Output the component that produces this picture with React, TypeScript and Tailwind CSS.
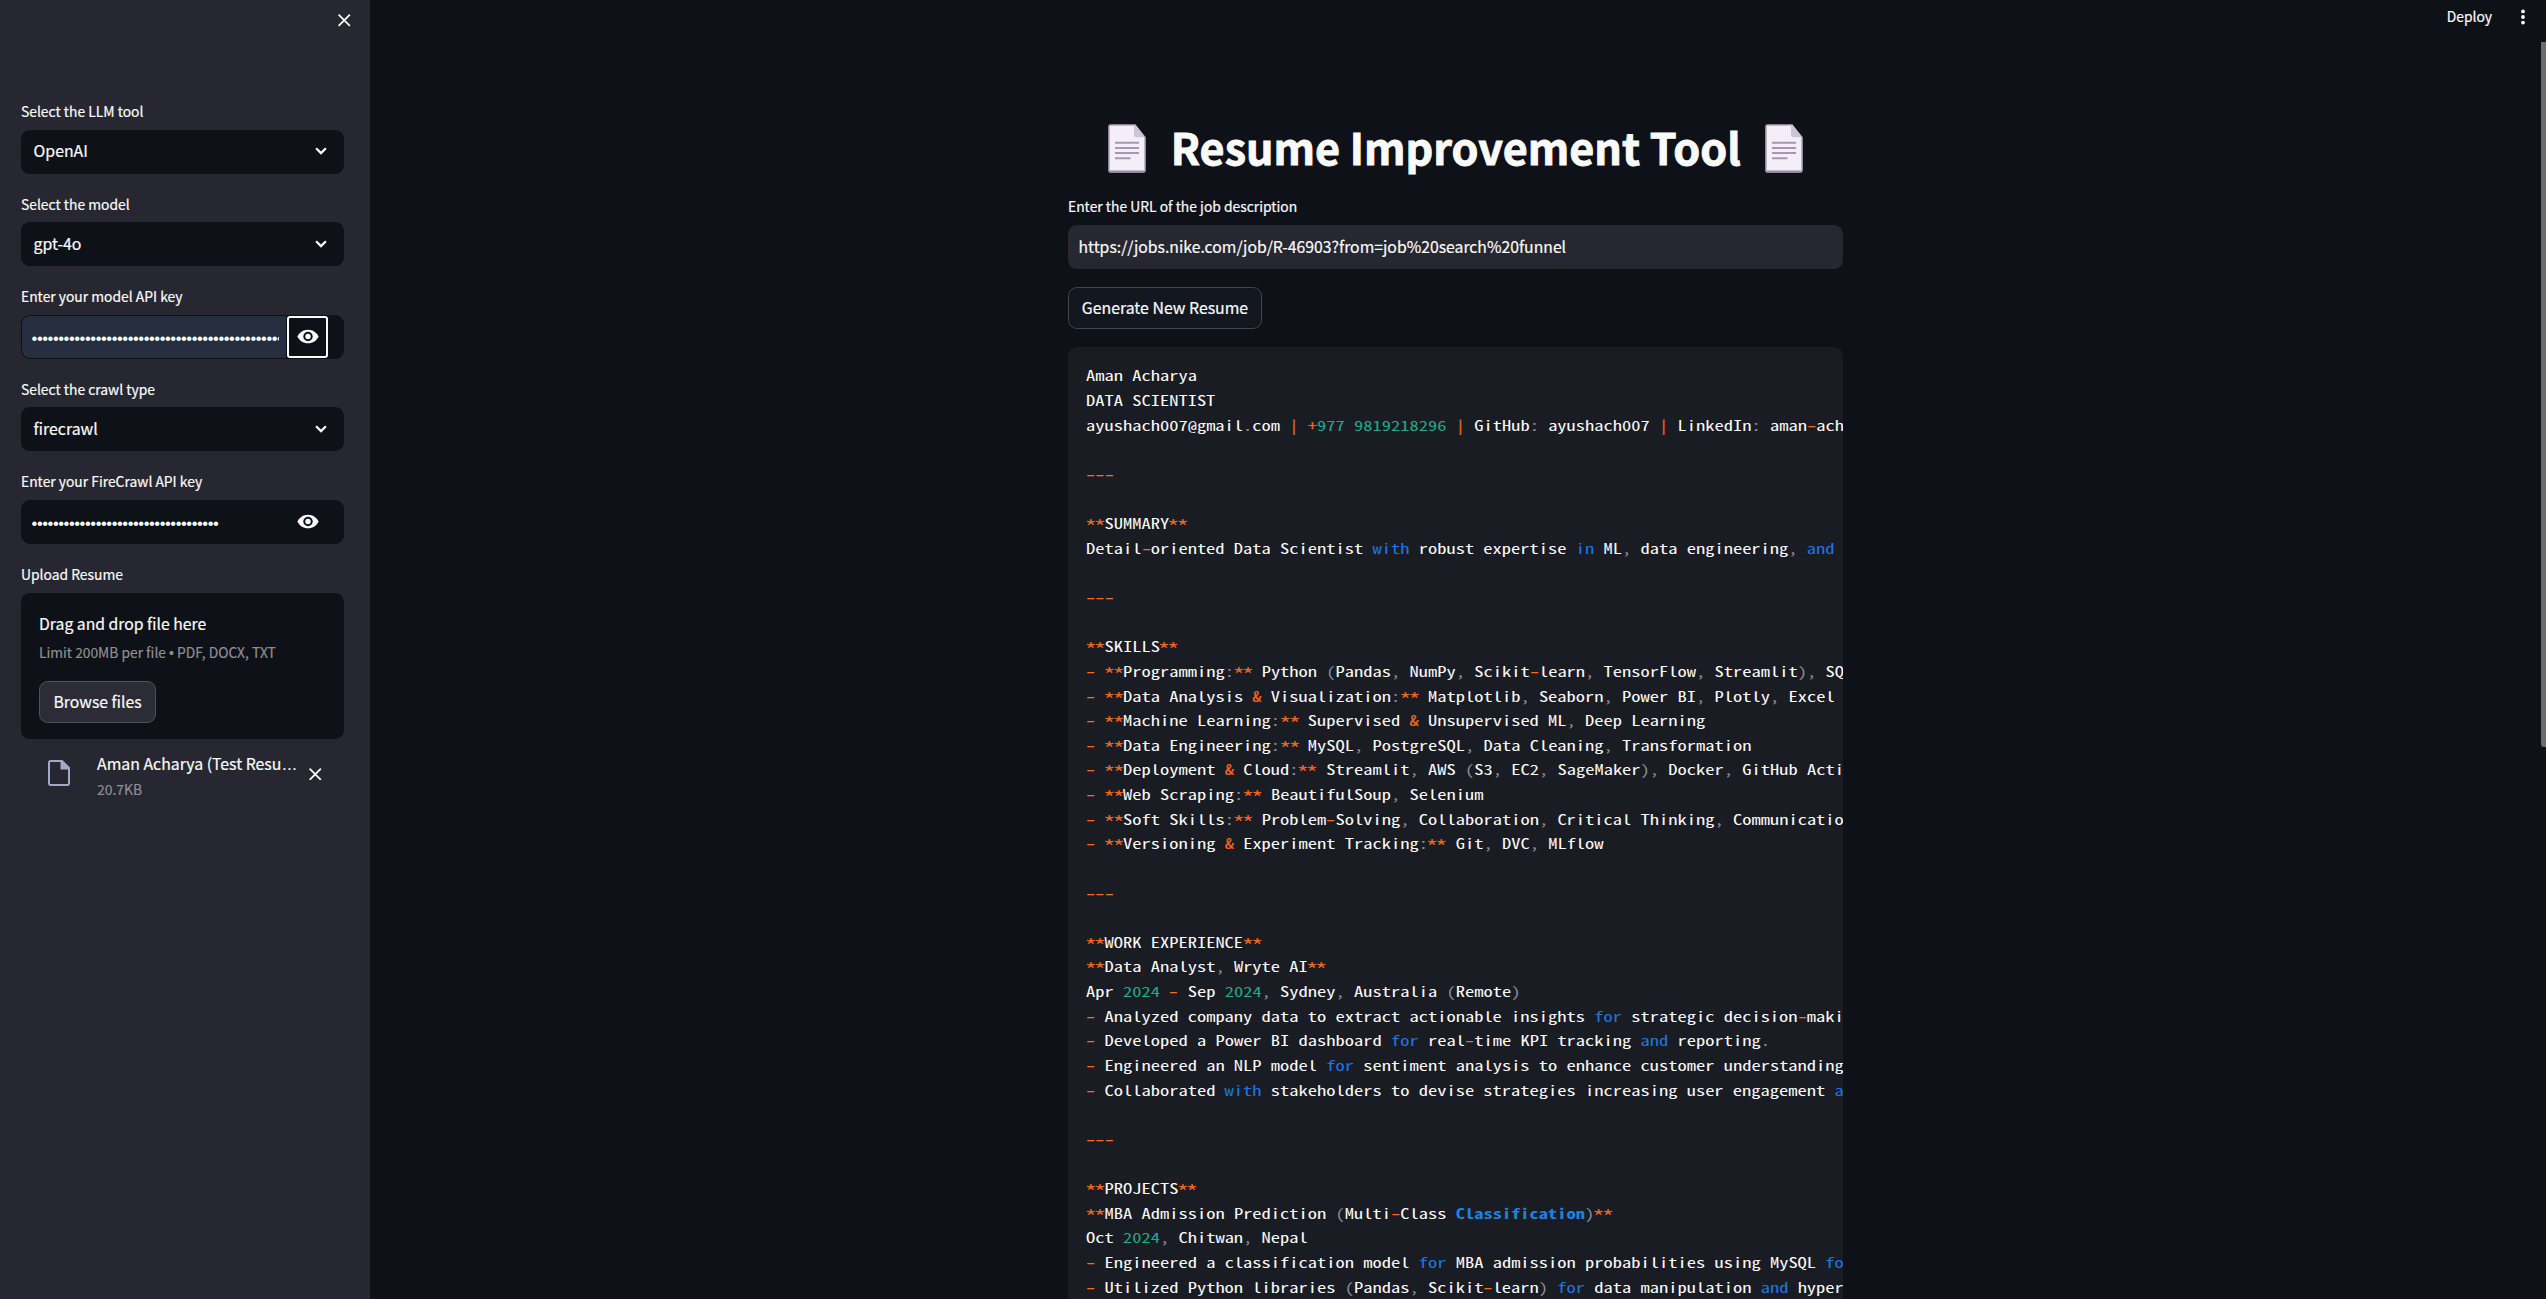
import React from "react";

const KEYWORDS = new Set(["with", "in", "and", "for"]);

const RESUME = `Aman Acharya
DATA SCIENTIST
ayushach007@gmail.com | +977 9819218296 | GitHub: ayushach007 | LinkedIn: aman-acharya

---

**SUMMARY**
Detail-oriented Data Scientist with robust expertise in ML, data engineering, and analytics.

---

**SKILLS**
- **Programming:** Python (Pandas, NumPy, Scikit-learn, TensorFlow, Streamlit), SQL
- **Data Analysis & Visualization:** Matplotlib, Seaborn, Power BI, Plotly, Excel
- **Machine Learning:** Supervised & Unsupervised ML, Deep Learning
- **Data Engineering:** MySQL, PostgreSQL, Data Cleaning, Transformation
- **Deployment & Cloud:** Streamlit, AWS (S3, EC2, SageMaker), Docker, GitHub Actions
- **Web Scraping:** BeautifulSoup, Selenium
- **Soft Skills:** Problem-Solving, Collaboration, Critical Thinking, Communication
- **Versioning & Experiment Tracking:** Git, DVC, MLflow

---

**WORK EXPERIENCE**
**Data Analyst, Wryte AI**
Apr 2024 - Sep 2024, Sydney, Australia (Remote)
- Analyzed company data to extract actionable insights for strategic decision-making.
- Developed a Power BI dashboard for real-time KPI tracking and reporting.
- Engineered an NLP model for sentiment analysis to enhance customer understanding.
- Collaborated with stakeholders to devise strategies increasing user engagement and retention.

---

**PROJECTS**
**MBA Admission Prediction (Multi-Class Classification)**
Oct 2024, Chitwan, Nepal
- Engineered a classification model for MBA admission probabilities using MySQL for storage.
- Utilized Python libraries (Pandas, Scikit-learn) for data manipulation and hyperparameter tuning.`;

function tokenClass(token: string): string {
  if (KEYWORDS.has(token)) return "text-[#1c77e0]";
  if (token === "Classification") return "font-bold text-[#1c83e1]";
  if (/^\d+$/.test(token)) return "text-[#21a98c]";
  if (token === "*") return "inline-block translate-y-[3px] scale-[1.35] leading-none text-[#f0641a]";
  if (token === "-") return "inline-block -translate-y-[0.6px] scale-x-[1.22] leading-none text-[#ff6a14] [-webkit-text-stroke:0.25px]";
  if (/^[|+&]$/.test(token)) return "text-[#f0641a] [-webkit-text-stroke:0.2px]";
  if (/^[.,:()]$/.test(token)) return "text-[#8a8e9c]";
  return "";
}

function CodeLine({ line }: { line: string }) {
  const tokens = line.match(/\w+|\s+|./g) ?? [];
  return (
    <div className="h-[24.64px]">
      {tokens.map((t, i) => {
        const cls = tokenClass(t);
        return cls ? (
          <span key={i} className={cls}>{t}</span>
        ) : (
          <React.Fragment key={i}>{t}</React.Fragment>
        );
      })}
    </div>
  );
}

function Label({ children }: { children: React.ReactNode }) {
  return <div className="h-[30.8px] text-[13.87px] leading-[25px] whitespace-nowrap">{children}</div>;
}

function Chevron() {
  return (
    <svg className="mr-[3px] h-[8px] w-[12px]" viewBox="0 0 12 8" fill="none" stroke="currentColor" strokeWidth="2.300">
      <path d="M1.100 1.300 6 6.100l4.900-4.800" />
    </svg>
  );
}

function Cross({ className }: { className: string }) {
  return (
    <svg className={className} viewBox="0 0 12 12" fill="none" stroke="currentColor" strokeWidth="1.700">
      <path d="M.6.6 11.400 11.400M11.400.6.6 11.400" />
    </svg>
  );
}

function Eye() {
  return (
    <svg className="h-[16px] w-[22px] -translate-y-[0.5px]" viewBox="0 0 22 16" fill="none">
      <path d="M11 1.200C6.200 1.200 2.200 4 .5 8c1.700 4 5.700 6.800 10.500 6.800S19.800 12 21.500 8C19.800 4 15.800 1.200 11 1.200z" fill="#fafafa" />
      <circle cx="11" cy="8" r="4.700" fill="#0e1117" />
      <circle cx="11" cy="8" r="2.700" fill="#fafafa" />
    </svg>
  );
}

function Select({ label, value }: { label: string; value: string }) {
  return (
    <div>
      <Label>{label}</Label>
      <div className="flex h-11 items-center justify-between rounded-[8.8px] bg-[#0e1117] pr-[14px] pb-[1px] pl-[12.600px] text-[15.85px] leading-6">
        <span>{value}</span>
        <Chevron />
      </div>
    </div>
  );
}

function Secret({ label, count, focused }: { label: string; count: number; focused?: boolean }) {
  return (
    <div>
      <Label>{label}</Label>
      <div className="flex h-11 overflow-hidden rounded-[8.8px] border border-[#0e1117] bg-[#0e1117]">
        <div className={focused ? "w-[264px] bg-[#262e40] pr-[7px] pl-[9.600px]" : "w-[264px] pr-[7px] pl-[9.600px]"}>
          <div className="overflow-hidden font-['Liberation_Sans',sans-serif] text-[16.5px] leading-[44px] tracking-[-0.440px] whitespace-nowrap [-webkit-text-stroke:0px]">
            {"•".repeat(count)}
          </div>
        </div>
        <div className={focused ? "ml-[1px] flex w-[41px] items-center justify-center rounded-[3px] border-2 border-[#fafafa]" : "ml-[1px] flex w-[41px] items-center justify-center"}>
          <Eye />
        </div>
      </div>
    </div>
  );
}

function PageIcon() {
  return (
    <svg className="mt-[2px] h-[49px] w-[38px]" viewBox="0 0 38 49">
      <path d="M2.500 1h24.500l10 12.500v32.500a2 2 0 0 1-2 2h-32.500a1.500 1.500 0 0 1-1.500-1.500v-44a1.500 1.500 0 0 1 1.500-1.500z" fill="#f3eef8" stroke="#b4a6b9" strokeWidth="1.600" />
      <path d="M26 1h1.500L37 13.300h-9a2 2 0 0 1-2-2z" fill="#cdc4d6" />
      <path d="M1.500 47.500h35" stroke="#998ea4" strokeWidth="1.800" />
      <path d="M7 18.700h24M7 24h24M7 29h24M7 34.200h15.500" stroke="#a897ae" strokeWidth="1.900" />
    </svg>
  );
}

function Sidebar() {
  return (
    <aside className="flex h-full w-[370px] shrink-0 flex-col bg-[#262730] pr-[26px] pl-[21px]">
      <div className="flex h-[99.2px] justify-end pt-[14px]">
        <Cross className="mr-[-6.500px] size-[12.500px]" />
      </div>
      <div className="flex flex-col gap-[17.7px]">
        <Select label="Select the LLM tool" value="OpenAI" />
        <Select label="Select the model" value="gpt-4o" />
        <Secret label="Enter your model API key" count={56} focused />
        <Select label="Select the crawl type" value="firecrawl" />
        <Secret label="Enter your FireCrawl API key" count={35} />
        <div className="pt-[0.5px]">
          <Label>Upload Resume</Label>
          <div className="flex h-[146px] flex-col items-start rounded-[8.8px] bg-[#0e1117] px-[18px] pt-[17px]">
            <div className="text-[15.75px] leading-[28px]">Drag and drop file here</div>
            <div className="mt-[2px] text-[13.8px] leading-[25px] text-[#8e8f93]">
              Limit 200MB per file <span className="font-['Liberation_Sans']">•</span> PDF, DOCX, TXT
            </div>
            <button className="mt-[15px] h-[42px] rounded-[8.8px] border border-[#50515a] bg-[#2b2c36] px-[13.500px] text-[15.75px] leading-[38px]">
              Browse files
            </button>
          </div>
          <div className="flex items-start pt-[11px] pl-[27px]">
            <svg className="mt-[10px] h-[26px] w-[22px]" viewBox="0 0 22 26" fill="none">
              <path d="M2.500 1h11.500l7 7v15.500a1.500 1.500 0 0 1-1.500 1.500h-17a1.500 1.500 0 0 1-1.500-1.500v-21a1.500 1.500 0 0 1 1.500-1.500z" stroke="#a3a8c3" strokeWidth="2" />
              <path d="M12.500 1h2l7 7v1.500h-9z" fill="#a3a8c3" />
            </svg>
            <div className="ml-[27px] w-[201px]">
              <div className="text-[15.85px] leading-[28px] whitespace-nowrap">
                Aman Acharya (Test Resu<span className="font-['Liberation_Sans']">…</span>
              </div>
              <div className="text-[13.87px] leading-[20px] text-[#8e8f95]">20.7KB</div>
            </div>
            <Cross className="mt-[18px] ml-[11px] size-[12.500px]" />
          </div>
        </div>
      </div>
    </aside>
  );
}

export default function App() {
  return (
    <div className="relative flex h-[1299px] w-[2546px] overflow-hidden bg-[#0e1117] font-['Noto_Sans_CJK_SC',sans-serif] text-[#fafafa] [-webkit-text-stroke:0.2px]">
      <Sidebar />
      <main className="flex min-w-0 flex-1 flex-col">
        <header className="flex h-[42px] shrink-0 items-start justify-end pr-[20px]">
          <span className="pt-[3px] text-[13.87px] leading-[26px]">Deploy</span>
          <svg className="mt-[9px] ml-[28px] h-4 w-[6px]" viewBox="0 0 6 16" fill="currentColor">
            <circle cx="3" cy="2.400" r="1.900" />
            <circle cx="3" cy="8" r="1.900" />
            <circle cx="3" cy="13.600" r="1.900" />
          </svg>
        </header>
        <div className="ml-[698px] flex w-[775px] flex-1 flex-col">
          <h1 className="mt-[76px] flex h-[60px] items-center justify-center pb-[1px] text-[43.1px] leading-[60px] font-bold whitespace-nowrap">
            <PageIcon />
            <span className="mr-[24px] ml-[24.5px] w-[571px] -translate-y-[2px] text-center [-webkit-text-stroke:0.9px]">Resume Improvement Tool</span>
            <PageIcon />
          </h1>
          <div className="mt-[16px]">
            <Label>Enter the URL of the job description</Label>
          </div>
          <div className="h-11 rounded-[8.8px] bg-[#262730] pl-[10.5px] text-[15.78px] leading-[43px]">
            https://jobs.nike.com/job/R-46903?from=job%20search%20funnel
          </div>
          <button className="mt-[18px] h-[42px] w-[194px] shrink-0 rounded-[8.8px] border border-[#41444c] bg-[#131720] text-center text-[15.85px] leading-[40px] whitespace-nowrap">
            Generate New Resume
          </button>
          <div className="mt-[18px] h-[960px] shrink-0 overflow-hidden rounded-[8.8px] bg-[#1a1c24] pt-[16.600px] pl-[18px]">
            <div className="w-[568px] origin-top-left scale-x-[1.3333] font-['Noto_Sans_Mono_CJK_SC','Liberation_Mono',monospace] text-[13.86px] leading-[24.64px] whitespace-pre [-webkit-text-stroke:0px]">
              {RESUME.split("\n").map((line, i) => (
                <CodeLine key={i} line={line} />
              ))}
            </div>
          </div>
        </div>
      </main>
      <div className="absolute top-[42px] right-0 h-[705px] w-[5px] rounded-bl-[3px] bg-[#6b6c70]" />
    </div>
  );
}
